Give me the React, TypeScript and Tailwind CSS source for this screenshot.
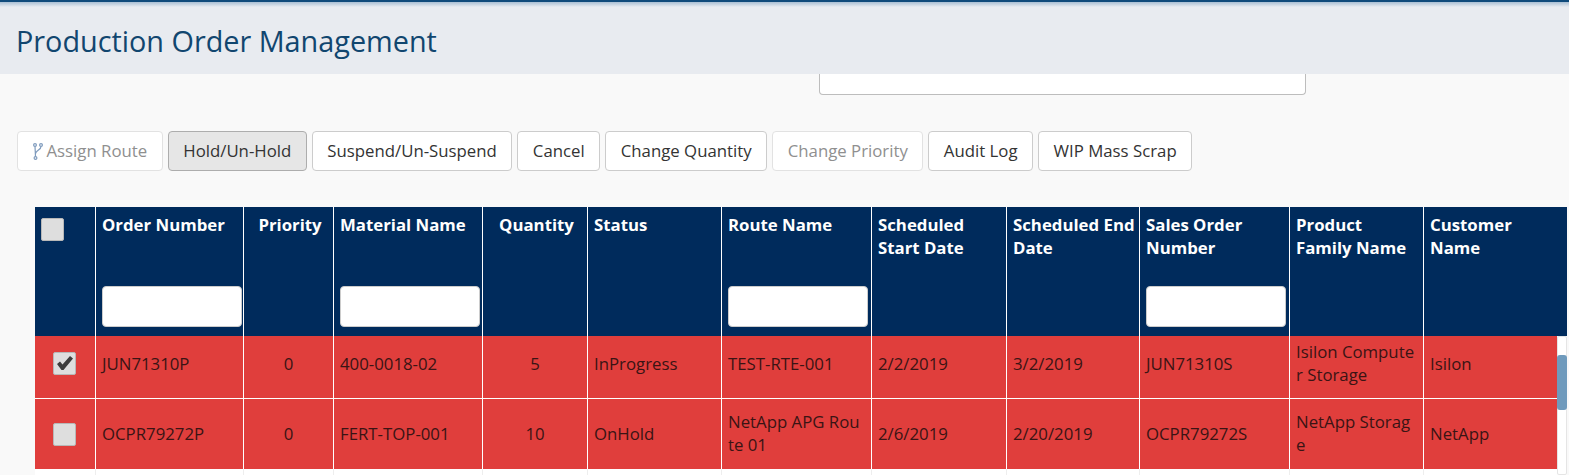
const buttons = [
  { label: "Assign Route", disabled: true, icon: true },
  { label: "Hold/Un-Hold", active: true },
  { label: "Suspend/Un-Suspend" },
  { label: "Cancel" },
  { label: "Change Quantity" },
  { label: "Change Priority", disabled: true },
  { label: "Audit Log" },
  { label: "WIP Mass Scrap" },
];

const columns = [
  { title: "Order Number", filter: true },
  { title: "Priority", center: true },
  { title: "Material Name", filter: true },
  { title: "Quantity", center: true },
  { title: "Status" },
  { title: "Route Name", filter: true },
  { title: "Scheduled Start Date" },
  { title: "Scheduled End Date" },
  { title: "Sales Order Number", filter: true },
  { title: "Product Family Name" },
  { title: "Customer Name" },
];

const rows = [
  {
    checked: true,
    rowClass: "h-[63px] border-b border-white",
    boxClass: "pb-[8px]",
    cellClass: "pb-[8px]",
    cells: ["JUN71310P", "0", "400-0018-02", "5", "InProgress", "TEST-RTE-001", "2/2/2019", "3/2/2019", "JUN71310S", "Isilon Computer Storage", "Isilon"],
  },
  {
    checked: false,
    rowClass: "h-[70px]",
    boxClass: "",
    cellClass: "pb-[2px]",
    cells: ["OCPR79272P", "0", "FERT-TOP-001", "10", "OnHold", "NetApp APG Route 01", "2/6/2019", "2/20/2019", "OCPR79272S", "NetApp Storage", "NetApp"],
  },
];

function Checkbox({ checked }: { checked?: boolean }) {
  return (
    <div className="w-[23px] h-[23px] rounded-[2px] bg-[#dedede] border border-[#b8b8b8] flex items-center justify-center">
      {checked && (
        <svg width="18" height="16" viewBox="0 0 18 16">
          <path d="M1 9 L4 6.5 L6.5 9.5 L14 1 L17 3.5 L7.5 15 L5.5 15 Z" fill="#3d3d3d" />
        </svg>
      )}
    </div>
  );
}

function RouteIcon() {
  return (
    <svg width="10" height="17" viewBox="0 0 10 17" fill="none" stroke="#7f9bbd" strokeWidth="1.2" className="mr-[4px]">
      <circle cx="2" cy="2" r="1.4" />
      <circle cx="8" cy="2" r="1.4" />
      <circle cx="2.5" cy="15" r="1.4" />
      <path d="M2 3.4 L2.5 13.6 M8 3.4 C8 7 3 7 2.4 11" />
    </svg>
  );
}

export default function App() {
  return (
    <div className="w-[1569px] h-[475px] overflow-hidden bg-[#f9f9f9] font-['Open_Sans',sans-serif] text-[16.8px]">
      {/* Title bar */}
      <div className="h-[74px] bg-[#e8ebf0] border-t-2 border-[#0f4a7b] pl-[16px] pt-[19px] relative z-10">
        <div className="absolute inset-x-0 top-0 h-[5px] bg-gradient-to-b from-[#a9bfd4] to-transparent" />
        <h1 className="text-[28.8px] leading-[40px] text-[#11466f] font-normal">Production Order Management</h1>
      </div>

      <div className="ml-[819px] w-[487px] h-[21px] bg-white border border-t-0 border-[#bdbdbd] rounded-b-[4px]" />

      {/* Toolbar */}
      <div className="flex gap-[5px] ml-[17px] mt-[36px]">
        {buttons.map((b) => (
          <button
            key={b.label}
            className={`h-[40px] px-[14.5px] rounded-[4px] border flex items-center whitespace-nowrap ${
              b.active
                ? "bg-[#e6e6e6] border-[#adadad] text-[#333333]"
                : b.disabled
                  ? "bg-white border-[#e2e2e2] text-[#8f8f8f]"
                  : "bg-white border-[#cccccc] text-[#333333]"
            }`}
          >
            {b.icon && <RouteIcon />}
            {b.label}
          </button>
        ))}
      </div>

      {/* Grid */}
      <div className="ml-[35px] mt-[36px] w-[1532px]">
        <div className="grid grid-cols-[61px_148px_90px_149px_105px_134px_150px_135px_133px_150px_134px_143px] h-[129px] bg-[#002b5c] text-white font-bold leading-[23px]">
          <div className="border-r border-white pl-[6px] pt-[11px]">
            <Checkbox />
          </div>
          {columns.map((c, i) => (
            <div
              key={c.title}
              className={`flex flex-col justify-between pl-[6px] pr-[3px] pt-[6px] pb-[9px] ${i < columns.length - 1 ? "border-r border-white" : ""} ${c.center ? "text-center" : ""}`}
            >
              <span>{c.title}</span>
              {c.filter && <input className="w-[140px] h-[41px] bg-white rounded-[4px] border border-[#cccccc]" />}
            </div>
          ))}
        </div>
        <div className="flex">
          <div className="w-[1522px]">
            {rows.map((r) => (
              <div
                key={r.cells[0]}
                className={`grid grid-cols-[61px_148px_90px_149px_105px_134px_150px_135px_133px_150px_134px_134px] ${r.rowClass} bg-[#e03e3c] text-[#3a1414] leading-[23px]`}
              >
                <div className={`border-r border-white flex items-center justify-center pr-[1px] ${r.boxClass}`}>
                  <Checkbox checked={r.checked} />
                </div>
                {r.cells.map((cell, i) => (
                  <div
                    key={i}
                    className={`flex items-center px-[6px] break-all ${r.cellClass} ${i < r.cells.length - 1 ? "border-r border-white" : ""} ${columns[i].center ? "justify-center" : ""}`}
                  >
                    <span>{cell}</span>
                  </div>
                ))}
              </div>
            ))}
            <div className="grid grid-cols-[61px_148px_90px_149px_105px_134px_150px_135px_133px_150px_134px_134px] h-[6px] bg-white">
              {columns.map((c) => (
                <div key={c.title} className="border-r border-[#eeeeee]" />
              ))}
            </div>
          </div>
          <div className="w-[10px] h-[139px] bg-white border border-[#e5e5e5] rounded-[2px] pt-[18px]">
            <div className="h-[55px] bg-[#6f9abc] rounded-[3px] -mx-[1px]" />
          </div>
        </div>
      </div>
    </div>
  );
}
